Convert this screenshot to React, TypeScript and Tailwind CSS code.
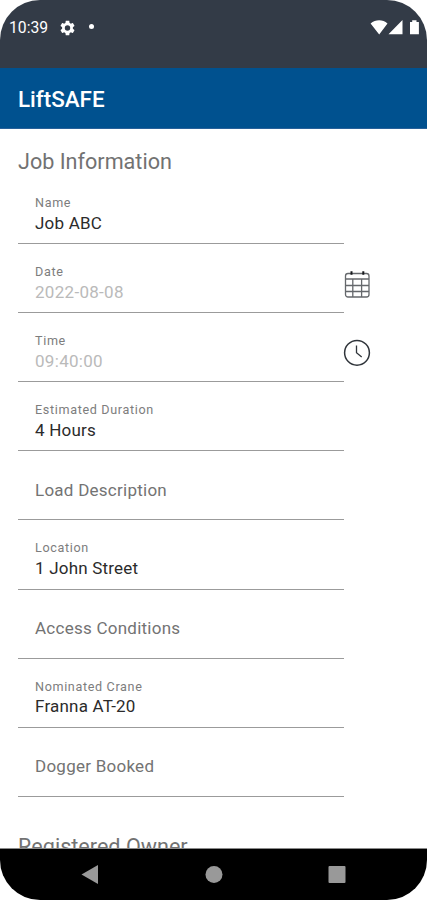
type Field = {
  label: string;
  value?: string;
  muted?: boolean;
  icon?: 'calendar' | 'clock';
};

const fields: Field[] = [
  { label: 'Name', value: 'Job ABC' },
  { label: 'Date', value: '2022-08-08', muted: true, icon: 'calendar' },
  { label: 'Time', value: '09:40:00', muted: true, icon: 'clock' },
  { label: 'Estimated Duration', value: '4 Hours' },
  { label: 'Load Description' },
  { label: 'Location', value: '1 John Street' },
  { label: 'Access Conditions' },
  { label: 'Nominated Crane', value: 'Franna AT-20' },
  { label: 'Dogger Booked' },
];

function CalendarIcon() {
  return (
    <svg width="28" height="30" viewBox="0 0 28 30" fill="none" stroke="#65686c" strokeWidth="1.3">
      <rect x="2.5" y="4.5" width="23.5" height="23.5" rx="2.5" />
      <path d="M2.5 10h23.5M2.5 16.5h23.5M2.5 22.5h23.5M9.8 10v18M18.6 10v18" />
      <path d="M8.5 2.2v3.6M20.3 2.2v3.6" stroke="#17191c" strokeWidth="2" />
    </svg>
  );
}

function ClockIcon() {
  return (
    <svg width="28" height="30" viewBox="0 0 28 30" fill="none" stroke="#30353b" strokeWidth="1.5">
      <circle cx="14" cy="14.8" r="12.4" />
      <path d="M13.5 7.5v7.2l5.2 4.3" strokeWidth="1.3" />
    </svg>
  );
}

function FieldRow({ label, value, muted, icon }: Field) {
  return (
    <div className="flex h-[69.1px]">
      <div className="w-[326px] border-b border-[#9b9b9b] pl-[17px]">
        {value ? (
          <>
            <div className="pt-5 text-[12.6px] leading-[15px] tracking-[0.65px] text-[#7d7d7d]">{label}</div>
            <div className={`pt-[0.5px] text-[17px] leading-[25px] ${muted ? 'tracking-[0.3px] text-[#bababa]' : 'tracking-[0.2px] text-[#2b2b2b]'}`}>
              {value}
            </div>
          </>
        ) : (
          <div className="pt-[26.5px] text-[17px] leading-[25px] tracking-[0.25px] text-[#737373]">{label}</div>
        )}
      </div>
      {icon && <div className="-ml-px pt-[25px]">{icon === 'calendar' ? <CalendarIcon /> : <ClockIcon />}</div>}
    </div>
  );
}

function StatusBar() {
  return (
    <header className="flex h-[68px] shrink-0 items-start justify-between bg-[#333b47] pl-[9px] pr-[6px] pt-4 text-white">
      <div className="flex h-6 items-center">
        <span className="w-[51px] text-[15.7px] leading-6">10:39</span>
        <svg width="15" height="16" viewBox="2 2 20 20" fill="white">
          <path d="M19.14 12.94c.04-.3.06-.61.06-.94s-.02-.64-.07-.94l2.03-1.58c.18-.14.23-.41.12-.61l-1.92-3.32c-.12-.22-.37-.29-.59-.22l-2.39.96c-.5-.38-1.03-.7-1.62-.94L14.4 2.81c-.04-.24-.24-.41-.48-.41h-3.84c-.24 0-.43.17-.47.41l-.36 2.54c-.59.24-1.13.57-1.62.94l-2.39-.96c-.22-.08-.47 0-.59.22L2.74 8.87c-.12.21-.08.47.12.61l2.03 1.58c-.05.3-.09.63-.09.94s.02.64.07.94l-2.03 1.58c-.18.14-.23.41-.12.61l1.92 3.32c.12.22.37.29.59.22l2.39-.96c.5.38 1.03.7 1.62.94l.36 2.54c.05.24.24.41.48.41h3.84c.24 0 .44-.17.47-.41l.36-2.54c.59-.24 1.13-.56 1.62-.94l2.39.96c.22.08.47 0 .59-.22l1.92-3.32c.12-.22.07-.47-.12-.61l-2.01-1.58zM12 15.6A3.6 3.6 0 1 1 12 8.4a3.6 3.6 0 0 1 0 7.2z" />
        </svg>
        <span className="-mt-1 ml-[13.5px] size-[5px] rounded-full bg-white" />
      </div>
      <svg className="mt-1" width="51" height="16" viewBox="0 0 51 16" fill="white">
        <path d="M.6 3.5C5.6-.9 12.8-.9 17.5 3.5L9.2 14.5ZM18.5 14.3 32.5 0v14.3ZM40 14.3V2h2.2V.3h4.3V2h2.4v12.3Z" />
      </svg>
    </header>
  );
}

function NavigationBar() {
  return (
    <nav className="flex h-[52px] shrink-0 items-center border-t border-[#8a8a8a] bg-black pl-[81px]">
      <svg width="265" height="20" viewBox="0 0 265 20" fill="#999">
        <path d="M.5 9.5 17 0v19Z" />
        <circle cx="133" cy="9.5" r="8.5" />
        <rect x="247.5" y="1" width="17" height="17" rx="1" />
      </svg>
    </nav>
  );
}

export default function App() {
  return (
    <div className="h-[900px] w-[427px] bg-white font-['Roboto',sans-serif]">
      <div className="flex h-full flex-col overflow-hidden rounded-[40px] bg-white">
        <StatusBar />
        <div className="flex h-[61px] shrink-0 items-center border-b border-[#28619a] bg-[#00518f] pl-[18px] pt-0.5 text-[22.4px] font-medium leading-8 text-white">
          LiftSAFE
        </div>
        <main className="min-h-0 flex-1 overflow-hidden px-[18px]">
          <h1 className="h-[46px] pt-[19px] text-[21.6px] leading-7 text-[#727272]">Job Information</h1>
          {fields.map((field) => (
            <FieldRow key={field.label} {...field} />
          ))}
          <h2 className="pt-[36px] text-[21.6px] leading-7 text-[#727272]">Registered Owner</h2>
        </main>
        <NavigationBar />
      </div>
    </div>
  );
}
